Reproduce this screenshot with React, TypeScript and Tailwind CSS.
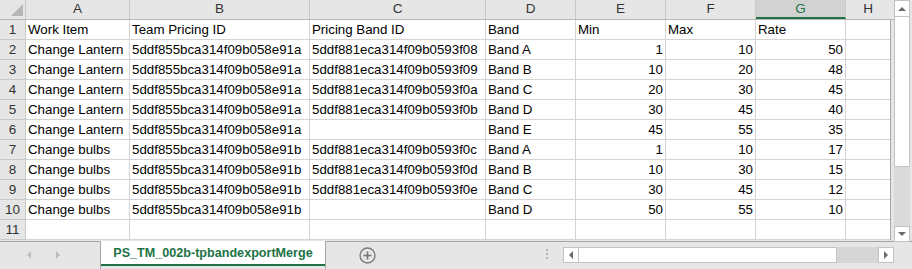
import React from "react";

const LETTERS = ["A", "B", "C", "D", "E", "F", "G", "H"];
const WCLS = ["w-[104px]", "w-[180px]", "w-[176px]", "w-[90px]", "w-[90px]", "w-[90px]", "w-[90px]", "w-[44px]"];

type Cell = string | number | "";
const T1 = "5ddf855bca314f09b058e91a";
const T2 = "5ddf855bca314f09b058e91b";
const P = "5ddf881eca314f09b0593f0";

const rows: Cell[][] = [
  ["Work Item", "Team Pricing ID", "Pricing Band ID", "Band", "Min", "Max", "Rate", ""],
  ["Change Lantern", T1, P + "8", "Band A", 1, 10, 50, ""],
  ["Change Lantern", T1, P + "9", "Band B", 10, 20, 48, ""],
  ["Change Lantern", T1, P + "a", "Band C", 20, 30, 45, ""],
  ["Change Lantern", T1, P + "b", "Band D", 30, 45, 40, ""],
  ["Change Lantern", T1, "", "Band E", 45, 55, 35, ""],
  ["Change bulbs", T2, P + "c", "Band A", 1, 10, 17, ""],
  ["Change bulbs", T2, P + "d", "Band B", 10, 30, 15, ""],
  ["Change bulbs", T2, P + "e", "Band C", 30, 45, 12, ""],
  ["Change bulbs", T2, "", "Band D", 50, 55, 10, ""],
  ["", "", "", "", "", "", "", ""],
];

function Tri({ dir, color = "#6b6b6b" }: { dir: "up" | "down" | "left" | "right"; color?: string }) {
  const pts =
    dir === "up" ? "0,5 4,1 8,5" : dir === "down" ? "0,1 4,5 8,1" : dir === "left" ? "5,0 1,4 5,8" : "1,0 5,4 1,8";
  const w = dir === "up" || dir === "down" ? 8 : 6;
  const h = dir === "up" || dir === "down" ? 6 : 8;
  return (
    <svg width={w} height={h} viewBox={`0 0 ${w} ${h}`}>
      <polygon points={pts} fill={color} />
    </svg>
  );
}

export default function App() {
  return (
    <div
      className="w-[912px] h-[269px] bg-[#e6e6e6] overflow-hidden flex flex-col text-black"
      style={{ fontFamily: '"Liberation Sans", Arial, sans-serif' }}
    >
      <div className="flex h-[241px] shrink-0">
        <div className="w-[894px] flex flex-col">
          <div className="flex h-[20px] shrink-0 bg-[#e6e6e6] border-b border-[#b7b7b7]">
            <div className="w-[26px] h-[19px] border-r border-[#c8c8c8] relative">
              <svg className="absolute left-[11px] top-[4px]" width="12" height="12" viewBox="0 0 12 12">
                <polygon points="12,0 12,12 0,12" fill="#b6b6b6" />
              </svg>
            </div>
            {LETTERS.map((l, i) => {
              const sel = l === "G";
              return (
                <div
                  key={l}
                  className={`${WCLS[i]} h-[19px] flex items-center justify-center text-[13.5px] ${
                    i < 7 ? "border-r border-[#c8c8c8]" : ""
                  } ${sel ? "bg-[#d2d2d2] text-[#217346] border-b-2 border-b-[#217346]" : "text-[#333]"}`}
                >
                  <span className={sel ? "mt-[2px]" : ""}>{l}</span>
                </div>
              );
            })}
          </div>
          <div className="flex flex-col">
            {rows.map((r, ri) => (
              <div key={ri} className="flex h-[20px]">
                <div className="w-[26px] h-[20px] bg-[#e6e6e6] border-r border-b border-[#c8c8c8] flex items-center justify-center text-[13.5px] text-[#333] pt-[1px]">
                  {ri + 1}
                </div>
                <div className="flex bg-white border-r border-[#a9a9a9]">
                  {r.map((c, ci) => (
                    <div
                      key={ci}
                      className={`${WCLS[ci]} h-[20px] border-b border-[#d4d4d4] ${
                        ci < 7 ? "border-r" : ""
                      } flex items-center text-[13.3px] whitespace-nowrap overflow-hidden pt-[1px] ${
                        typeof c === "number" ? "justify-end pr-[2px]" : "pl-[2px]"
                      }`}
                    >
                      {c}
                    </div>
                  ))}
                </div>
              </div>
            ))}
          </div>
        </div>
        <div className="w-[16px] h-[242px] flex flex-col bg-[#dadada] z-10">
          <div className="h-[17px] w-[16px] bg-white border border-[#c3c3c3] flex items-center justify-center">
            <Tri dir="up" />
          </div>
          <div className="h-[150px] w-[16px] bg-white border-x border-b border-[#c3c3c3]" />
          <div className="flex-1" />
          <div className="h-[16px] w-[16px] bg-white border border-[#c3c3c3] flex items-center justify-center">
            <Tri dir="down" />
          </div>
        </div>
      </div>
      <div className="flex h-[28px] shrink-0">
        <div className="w-[101px] border-t border-r border-[#a6a6a6] flex items-center pb-[2px]">
          <div className="w-[32px] flex justify-end">
            <Tri dir="left" color="#bdbdbd" />
          </div>
          <div className="w-[29px] flex justify-end">
            <Tri dir="right" color="#bdbdbd" />
          </div>
        </div>
        <div className="w-[224px] h-[25px] bg-white border-b-2 border-[#217346] flex items-center justify-center text-[12.6px] font-bold text-[#217346] pt-[1px]">
          PS_TM_002b-tpbandexportMerge
        </div>
        <div className="flex-1 border-t border-l border-[#a6a6a6] flex items-start">
          <div className="ml-[33px] mt-[5px] w-[17px] h-[17px]">
            <svg width="17" height="17" viewBox="0 0 17 17">
              <circle cx="8.5" cy="8.5" r="7.5" fill="none" stroke="#777" strokeWidth="1.3" />
              <line x1="8.5" y1="4.5" x2="8.5" y2="12.5" stroke="#777" strokeWidth="1.6" />
              <line x1="4.5" y1="8.5" x2="12.5" y2="8.5" stroke="#777" strokeWidth="1.6" />
            </svg>
          </div>
          <div className="ml-[170px] mt-[7px] flex flex-col gap-[2px]">
            <div className="w-[2px] h-[2px] bg-[#b5b5b5]" />
            <div className="w-[2px] h-[2px] bg-[#b5b5b5]" />
            <div className="w-[2px] h-[2px] bg-[#b5b5b5]" />
          </div>
          <div className="ml-[15px] mt-[5px] flex h-[16px]">
            <div className="w-[16px] h-[16px] bg-white border border-[#c3c3c3] flex items-center justify-center">
              <Tri dir="left" />
            </div>
            <div className="w-[258px] h-[16px] bg-white border-y border-r border-[#c3c3c3]" />
            <div className="w-[41px] h-[16px] bg-[#d6d6d6]" />
            <div className="w-[16px] h-[16px] bg-white border border-[#c3c3c3] flex items-center justify-center">
              <Tri dir="right" />
            </div>
          </div>
        </div>
      </div>
    </div>
  );
}
